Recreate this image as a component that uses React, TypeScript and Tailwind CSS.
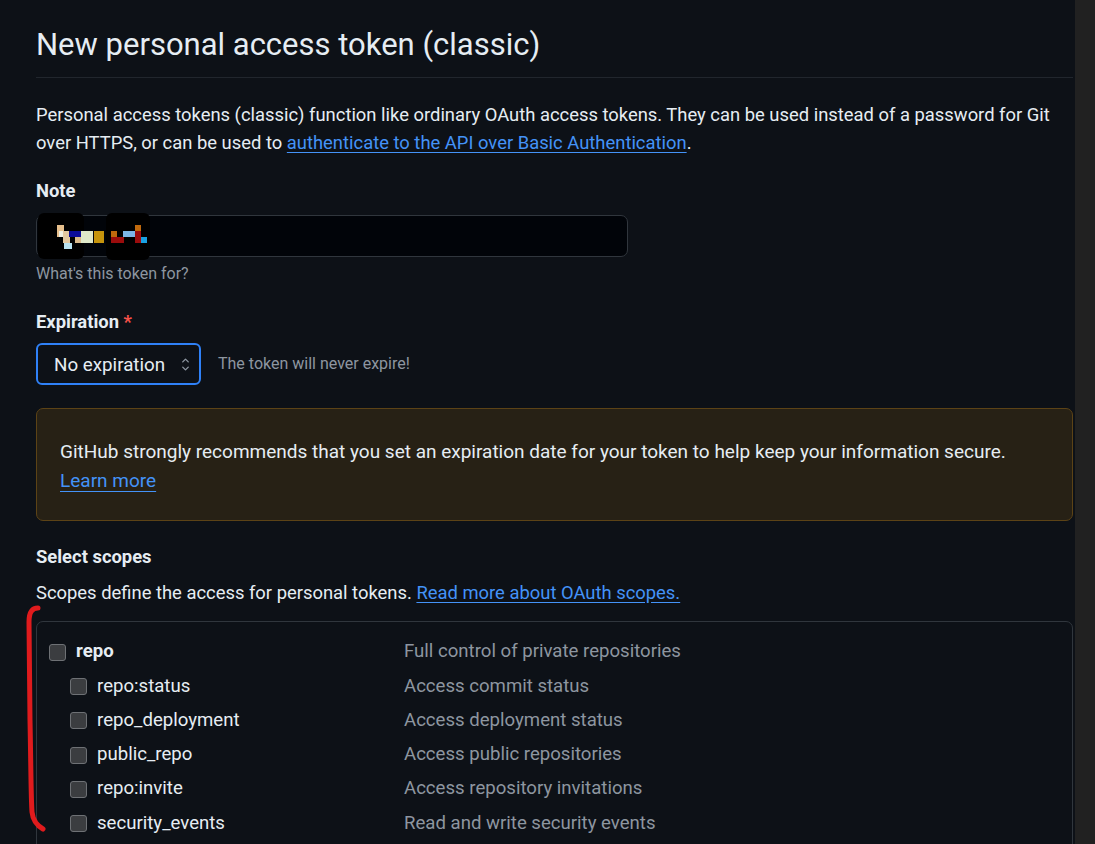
import { ChevronUp, ChevronDown } from "lucide-react";

const SCOPES = [
  { name: "repo", desc: "Full control of private repositories", child: false },
  { name: "repo:status", desc: "Access commit status", child: true },
  { name: "repo_deployment", desc: "Access deployment status", child: true },
  { name: "public_repo", desc: "Access public repositories", child: true },
  { name: "repo:invite", desc: "Access repository invitations", child: true },
  { name: "security_events", desc: "Read and write security events", child: true },
];

function Redacted() {
  // pixelated note value + black blobs laid over the input
  return (
    <svg className="absolute left-0 top-[-3px] pointer-events-none" width="120" height="48" viewBox="0 0 120 48">
      <rect x="1" y="0" width="46" height="46" rx="6" fill="#000" />
      <rect x="69" y="0" width="44" height="47" rx="6" fill="#000" />
      <rect x="20" y="12" width="7" height="12" fill="#e6bf8c" />
      <rect x="22" y="18" width="4" height="6" fill="#f2f0e2" />
      <rect x="26" y="18" width="7" height="12" fill="#e3c8a0" />
      <rect x="27" y="30" width="8" height="6" fill="#b9e2f0" />
      <rect x="32" y="18" width="12" height="6" fill="#0b0b98" />
      <rect x="38" y="24" width="6" height="6" fill="#d9b98a" />
      <rect x="44" y="18" width="12" height="12" fill="#dfe8c9" />
      <rect x="57" y="18" width="10" height="12" fill="#c6940c" />
      <rect x="74" y="18" width="6" height="6" fill="#c0690c" />
      <rect x="74" y="24" width="13" height="6" fill="#9b0c0c" />
      <rect x="86" y="18" width="12" height="6" fill="#7cb6e6" />
      <rect x="98" y="12" width="6" height="6" fill="#c0690c" />
      <rect x="98" y="18" width="6" height="12" fill="#9b0c0c" />
      <rect x="104" y="24" width="6" height="6" fill="#19a0e0" />
    </svg>
  );
}

function Checkbox() {
  return <span className="block w-[17px] h-[17px] rounded-[3px] bg-[#3b3d40] border border-[#6e7175] shrink-0" />;
}

export default function App() {
  return (
    <div className="flex w-[1095px] h-[844px] overflow-hidden bg-[#0d1117] text-[#e6edf3] font-['Roboto','Noto_Sans',sans-serif] text-[18.4px]">
      <div className="relative w-[1075px] shrink-0 pl-[36px] pr-[2px]">
        {/* hand-drawn annotation */}
        <svg className="absolute left-0 top-[600px] pointer-events-none" width="60" height="240" viewBox="0 0 60 240">
          <path
            d="M38 8 C32 8 29 12 29 22 L30 120 C31 170 31 200 32 212 C33 222 38 226 43 229"
            fill="none"
            stroke="#e01b1d"
            strokeWidth="5"
            strokeLinecap="round"
          />
        </svg>

        <div className="pt-[27px] border-b border-[#21262d]">
          <h1 className="text-[31px] leading-[36px] pb-[14px] font-normal">New personal access token (classic)</h1>
        </div>

        <p className="mt-[23px] leading-[28px] whitespace-nowrap">
          Personal access tokens (classic) function like ordinary OAuth access tokens. They can be used instead of a password for Git
          <br />
          over HTTPS, or can be used to{" "}
          <a className="text-[#4493f8] underline underline-offset-[3px]">authenticate to the API over Basic Authentication</a>.
        </p>

        <div className="mt-[22px] font-bold leading-[24px]">Note</div>
        <div className="relative mt-[12px] w-[592px] h-[42px] rounded-[7px] border border-[#30363d] bg-[#010409]">
          <Redacted />
        </div>
        <div className="mt-[7px] text-[16px] leading-[20px] text-[#8d96a0]">What's this token for?</div>

        <div className="mt-[26px] font-bold leading-[24px]">
          Expiration <span className="text-[#f85149]">*</span>
        </div>
        <div className="mt-[9px] flex items-center gap-[17px]">
          <div className="flex items-center justify-between w-[165px] h-[42px] rounded-[6px] border-2 border-[#2f81f7] pl-[16px] pr-[8px]">
            <span className="text-[18.8px] pt-[3px]">No expiration</span>
            <span className="flex flex-col items-center text-[#8d96a0]">
              <ChevronUp className="w-[11px] h-[11px] -mb-[3px]" strokeWidth={3} />
              <ChevronDown className="w-[11px] h-[11px]" strokeWidth={3} />
            </span>
          </div>
          <span className="text-[16px] text-[#8d96a0]">The token will never expire!</span>
        </div>

        <div className="mt-[23px] h-[113px] rounded-[7px] border border-[#5c4316] bg-[#272115] px-[23px] pt-[28px] leading-[29px] text-[19px]">
          <div>GitHub strongly recommends that you set an expiration date for your token to help keep your information secure.</div>
          <a className="text-[#4493f8] underline underline-offset-[4px]">Learn more</a>
        </div>

        <div className="mt-[24px] font-bold leading-[24px]">Select scopes</div>
        <div className="mt-[12px] leading-[24px]">
          Scopes define the access for personal tokens.{" "}
          <a className="text-[#4493f8] underline underline-offset-[3px]">Read more about OAuth scopes.</a>
        </div>

        <div className="mt-[16px] h-[300px] rounded-[7px] border border-[#30363d] pt-[13px] text-[18.6px]">
          {SCOPES.map((s) => (
            <div key={s.name} className="flex items-center h-[34.3px]">
              <div className={`flex items-center gap-[10px] w-[367px] ${s.child ? "pl-[33px]" : "pl-[12px]"}`}>
                <Checkbox />
                <span className={s.child ? "" : "font-bold"}>{s.name}</span>
              </div>
              <span className="text-[#8d96a0]">{s.desc}</span>
            </div>
          ))}
        </div>
      </div>
      <div className="flex-1 bg-[#212121]" />
    </div>
  );
}
